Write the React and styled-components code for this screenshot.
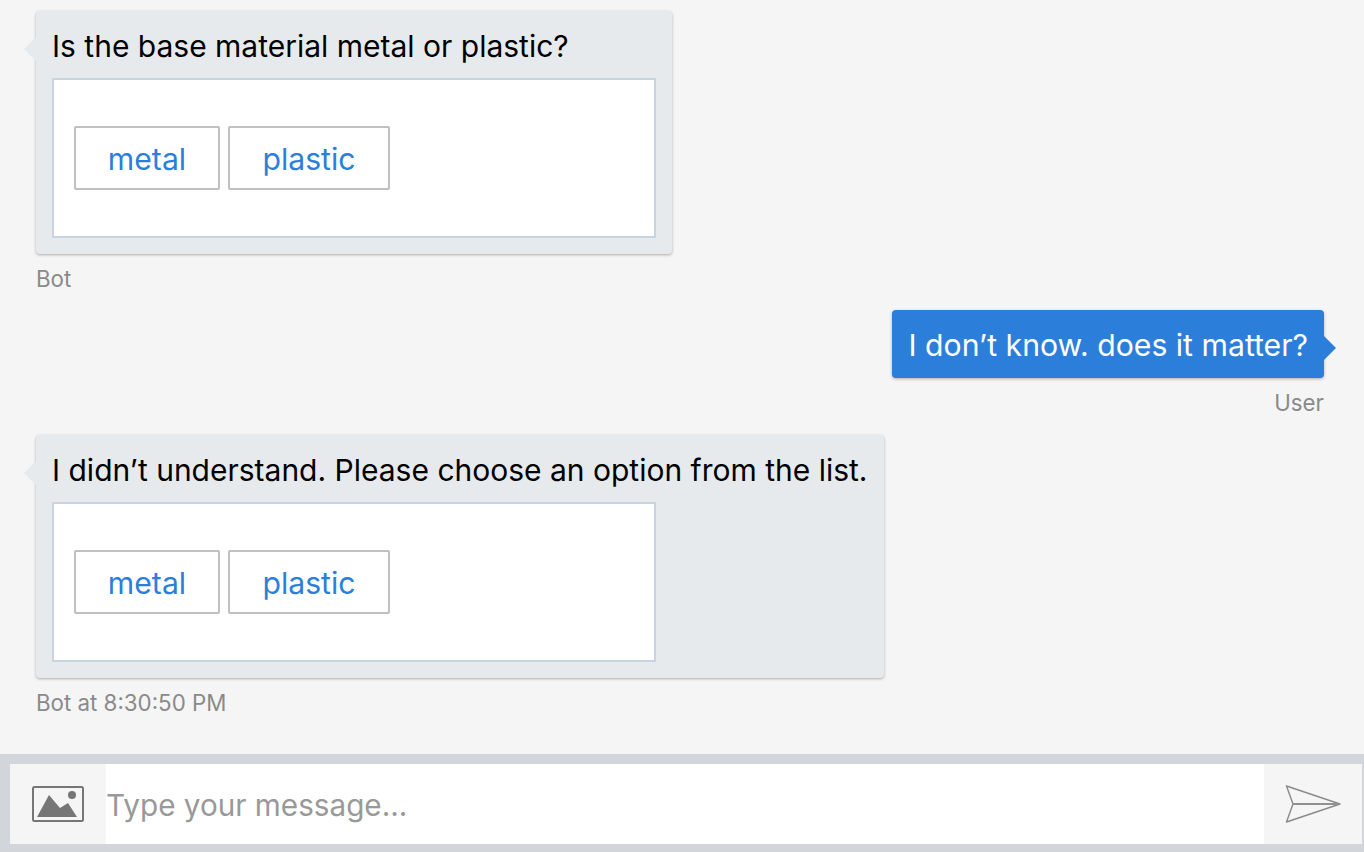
import React from "react";
import styled, { createGlobalStyle } from "styled-components";

const Global = createGlobalStyle`
  html, body { margin: 0; padding: 0; background: #f5f5f5; }
  body { font-family: Inter, "Liberation Sans", sans-serif; overflow: hidden; }
`;

const Page = styled.div`
  width: 1364px;
  height: 852px;
  display: flex;
  flex-direction: column;
  background: #f5f5f5;
`;

const History = styled.div`
  flex: 1;
  display: flex;
  flex-direction: column;
  padding: 11px 40px 0 36px;
`;

const Message = styled.div`
  display: flex;
  flex-direction: column;
  align-items: ${(p) => (p.$user ? "flex-end" : "flex-start")};
  margin-bottom: ${(p) => p.$gap || 0}px;
`;

const Bubble = styled.div`
  position: relative;
  box-sizing: border-box;
  padding: ${(p) => (p.$user ? "16px 16px 14px" : "16px")};
  border-radius: 4px;
  background: ${(p) => (p.$user ? "#2b7fdb" : "#e7eaed")};
  color: ${(p) => (p.$user ? "#fff" : "#000")};
  box-shadow: 0 1px 3px rgba(0, 0, 0, 0.3);
  &::before {
    content: "";
    position: absolute;
    top: 26px;
    ${(p) => (p.$user ? "right: -12px" : "left: -12px")};
    border-top: 12px solid transparent;
    border-bottom: 12px solid transparent;
    ${(p) =>
      p.$user
        ? "border-left: 12px solid #2b7fdb"
        : "border-right: 12px solid #e7eaed"};
  }
`;

const Text = styled.div`
  font-size: ${(p) => (p.$user ? 30.2 : 30)}px;
  line-height: 38px;
  white-space: nowrap;
`;

const Card = styled.div`
  box-sizing: border-box;
  width: 604px;
  height: 160px;
  margin-top: 13px;
  padding: 46px 20px;
  display: flex;
  gap: 8px;
  align-items: flex-start;
  background: #fff;
  border: 2px solid #c8d4e0;
`;

const Choice = styled.button`
  box-sizing: border-box;
  height: 64px;
  width: ${(p) => p.$w}px;
  padding: 2px 0 0;
  background: #fff;
  border: 2px solid #c0c0c0;
  border-radius: 2px;
  color: #2b7fdb;
  font-family: inherit;
  font-size: 30.2px;
  text-align: center;
`;

const Meta = styled.div`
  margin-top: 13px;
  font-size: 22.3px;
  line-height: 24px;
  color: #8a8a8a;
  white-space: nowrap;
`;

const InputBar = styled.div`
  flex: none;
  height: 98px;
  box-sizing: border-box;
  padding: 10px 2px 8px 10px;
  display: flex;
  background: #d2d6db;
`;

const IconSlot = styled.div`
  flex: none;
  width: ${(p) => p.$w}px;
  display: flex;
  align-items: center;
  justify-content: center;
  background: #f5f5f5;
`;

const Field = styled.div`
  flex: 1;
  display: flex;
  align-items: center;
  box-sizing: border-box;
  padding-top: 2px;
  background: #fff;
  color: #999;
  font-size: 29.7px;
`;

const PictureIcon = () => (
  <svg width="52" height="36" viewBox="0 0 52 36">
    <rect x="1" y="1" width="50" height="34" rx="1.5" fill="none" stroke="#767676" strokeWidth="2" />
    <circle cx="40" cy="9" r="4" fill="#767676" />
    <path d="M5 31 L17 9 L28 22 L36 17 L45 31 Z" fill="#767676" />
  </svg>
);

const SendIcon = () => (
  <svg width="56" height="38" viewBox="0 0 56 38">
    <path d="M1.5 1 L55 19 L1.5 37 L8 19 Z" fill="none" stroke="#8a8a8a" strokeWidth="1.4" strokeLinejoin="round" />
    <path d="M8 19 H55" stroke="#909090" strokeWidth="2" />
  </svg>
);

const Choices = () => (
  <Card>
    <Choice $w={146}>metal</Choice>
    <Choice $w={162}>plastic</Choice>
  </Card>
);

export default function App() {
  return (
    <Page>
      <Global />
      <History>
        <Message $gap={19}>
          <Bubble>
            <Text>Is the base material metal or plastic?</Text>
            <Choices />
          </Bubble>
          <Meta>Bot</Meta>
        </Message>
        <Message $user $gap={20}>
          <Bubble $user>
            <Text $user>I don’t know. does it matter?</Text>
          </Bubble>
          <Meta>User</Meta>
        </Message>
        <Message>
          <Bubble>
            <Text>I didn’t understand. Please choose an option from the list.</Text>
            <Choices />
          </Bubble>
          <Meta>Bot at 8:30:50 PM</Meta>
        </Message>
      </History>
      <InputBar>
        <IconSlot $w={96}>
          <PictureIcon />
        </IconSlot>
        <Field>Type your message...</Field>
        <IconSlot $w={98}>
          <SendIcon />
        </IconSlot>
      </InputBar>
    </Page>
  );
}
